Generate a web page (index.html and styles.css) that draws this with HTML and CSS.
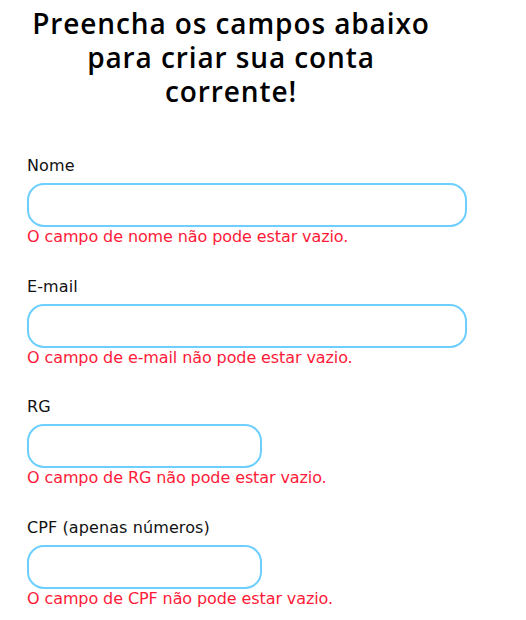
FILE: index.html
```html
<!DOCTYPE html>
<html lang="pt-BR">
<head>
<meta charset="utf-8">
<title>Criar conta corrente</title>
<link rel="stylesheet" href="styles.css">
</head>
<body>
<main class="page">
  <h1 class="title">Preencha os campos abaixo para criar sua conta corrente!</h1>
  <form class="form">
    <div class="field">
      <label class="label" for="nome">Nome</label>
      <input class="input input-wide" id="nome" type="text">
      <p class="error">O campo de nome não pode estar vazio.</p>
    </div>
    <div class="field">
      <label class="label" for="email">E-mail</label>
      <input class="input input-wide" id="email" type="text">
      <p class="error">O campo de e-mail não pode estar vazio.</p>
    </div>
    <div class="field">
      <label class="label" for="rg">RG</label>
      <input class="input input-short" id="rg" type="text">
      <p class="error">O campo de RG não pode estar vazio.</p>
    </div>
    <div class="field">
      <label class="label" for="cpf">CPF (apenas números)</label>
      <input class="input input-short" id="cpf" type="text">
      <p class="error">O campo de CPF não pode estar vazio.</p>
    </div>
  </form>
</main>
</body>
</html>
```
FILE: styles.css
```css
html, body {
  margin: 0;
  padding: 0;
  background: #ffffff;
}

.page {
  padding-top: 6px;
}

.title {
  width: 410px;
  margin: 0 0 0 26px;
  font-family: "Open Sans", sans-serif;
  font-size: 28px;
  font-weight: 600;
  letter-spacing: 0.9px;
  line-height: 34px;
  text-align: center;
  color: #000000;
}

.form {
  display: flex;
  flex-direction: column;
  gap: 30.5px;
  padding-left: 27px;
  margin-top: 48px;
}

.field {
  display: flex;
  flex-direction: column;
  align-items: flex-start;
}

.label {
  font-family: "DejaVu Sans", sans-serif;
  font-size: 16px;
  line-height: 20px;
  letter-spacing: 0.1px;
  color: #111111;
}

.input {
  box-sizing: border-box;
  height: 44px;
  margin: 7px 0 0 0;
  border: 2px solid #6dcfff;
  border-radius: 17px;
  background: #ffffff;
  outline: none;
  padding: 0 12px;
}

.input-wide {
  width: 440px;
}

.input-short {
  width: 235px;
}

.error {
  margin: 1px 0 0 0;
  font-family: "DejaVu Sans", sans-serif;
  font-size: 16px;
  line-height: 18px;
  letter-spacing: -0.1px;
  color: #ff1a38;
}
```
